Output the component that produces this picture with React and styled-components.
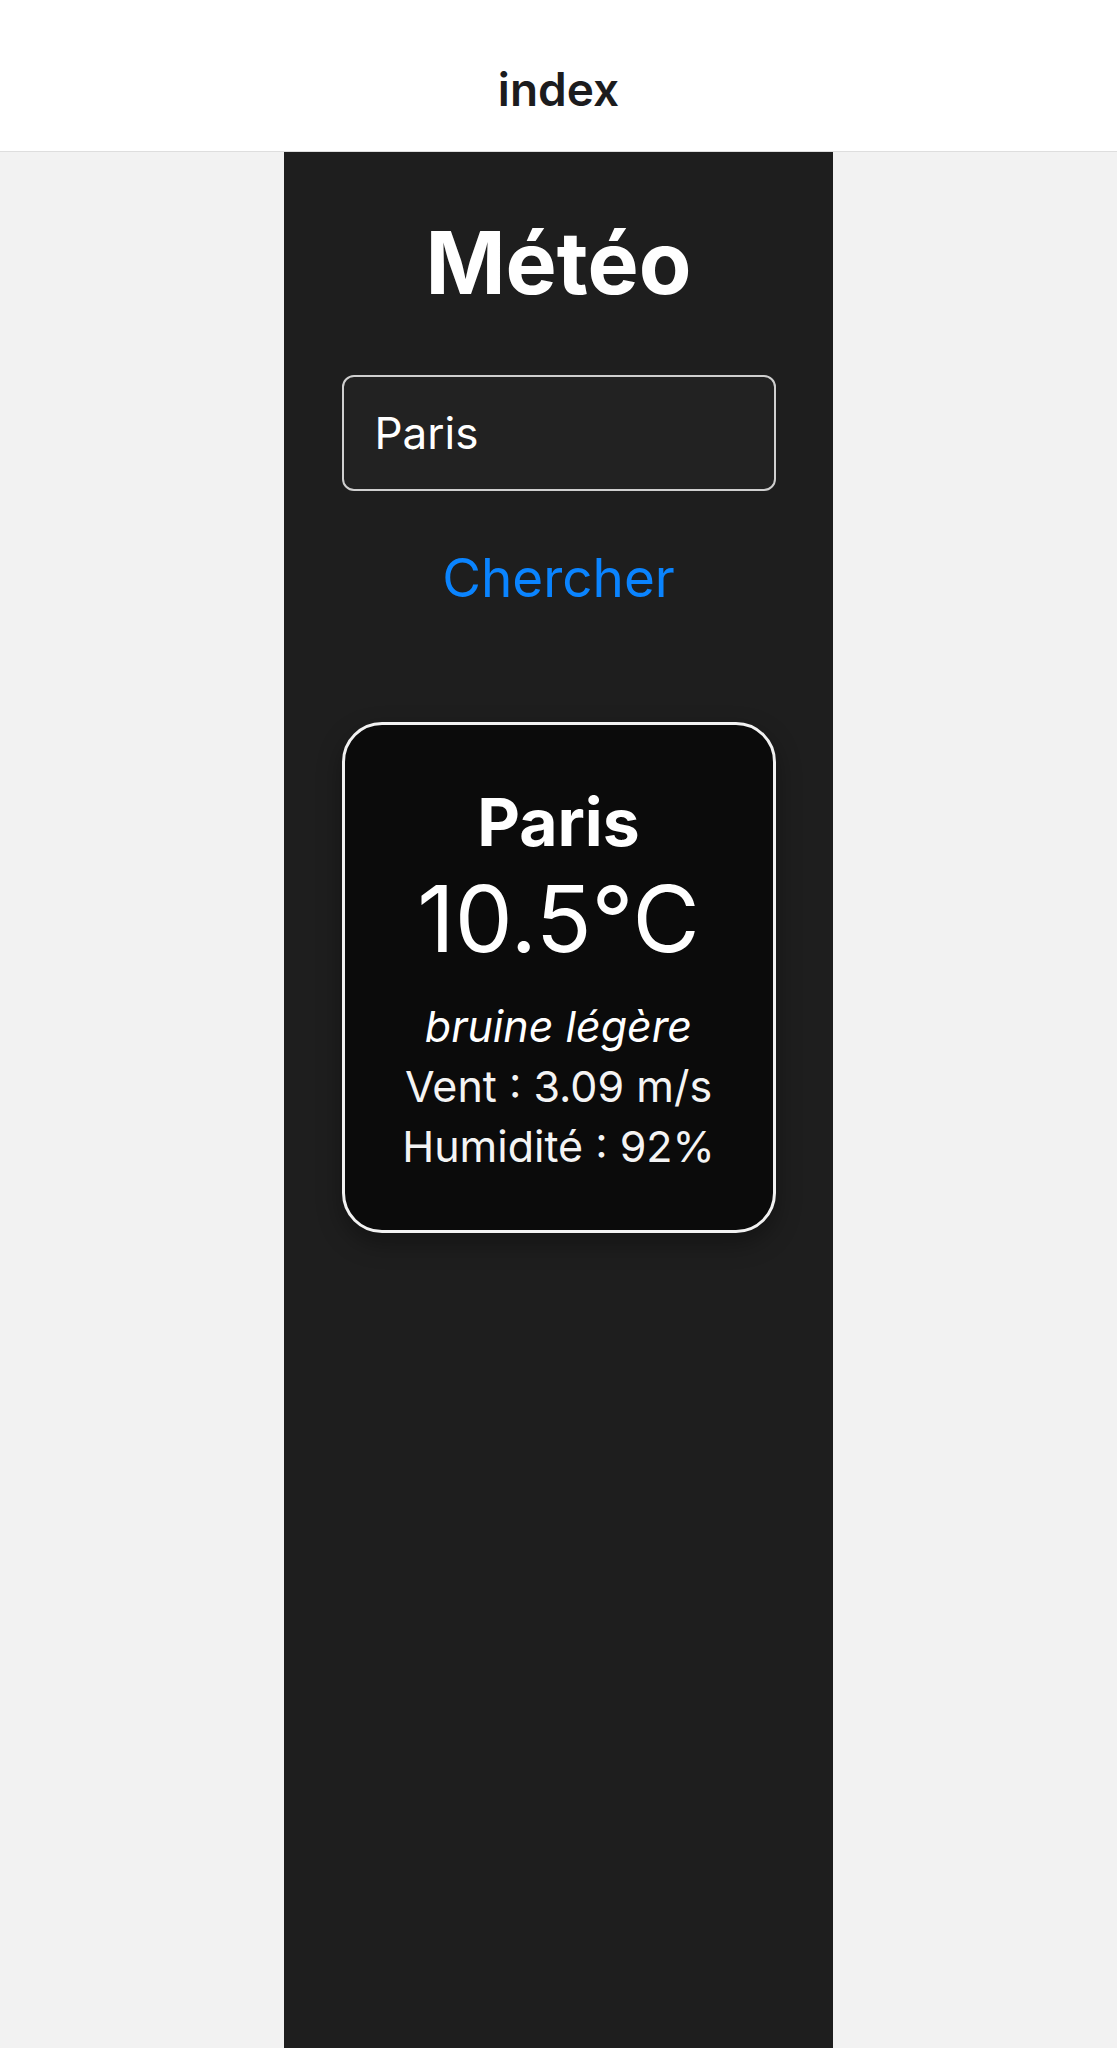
import React, { useState } from "react";
import styled, { createGlobalStyle } from "styled-components";

const GlobalStyle = createGlobalStyle`
    html, body {
        margin: 0;
        padding: 0;
        background: #f2f2f2;
        font-family: Inter, "Noto Sans", "Liberation Sans", sans-serif;
    }
    * {
        box-sizing: border-box;
    }
`;

const App = () => {
    const [city, setCity] = useState("Paris");

    const weather = {
        name: "Paris",
        temp: 10.5,
        description: "bruine légère",
        wind: 3.09,
        humidity: 92,
    };

    return (
        <>
            <GlobalStyle />
            <Header>
                <HeaderTitle>index</HeaderTitle>
            </Header>
            <Page>
                <Column>
                    <Title>Météo</Title>
                    <CityInput
                        value={city}
                        onChange={(e) => setCity(e.target.value)}
                    />
                    <SearchBtn type="button">Chercher</SearchBtn>
                    <Card>
                        <CityName>{weather.name}</CityName>
                        <Temp>{weather.temp}°C</Temp>
                        <Description>{weather.description}</Description>
                        <Detail>Vent : {weather.wind} m/s</Detail>
                        <Detail>Humidité : {weather.humidity}%</Detail>
                    </Card>
                </Column>
            </Page>
        </>
    );
};

const Header = styled.header`
    height: 152px;
    background: #ffffff;
    border-bottom: 1px solid #dedede;
    display: flex;
    align-items: center;
    justify-content: center;
    padding-top: 26px;
`;
const HeaderTitle = styled.h1`
    margin: 0;
    font-size: 46px;
    font-weight: 600;
    line-height: 60px;
    color: #1c1c1e;
`;
const Page = styled.main`
    display: flex;
    justify-content: center;
    background: #f2f2f2;
`;
const Column = styled.div`
    width: 549px;
    min-height: 1896px;
    background: #1e1e1e;
    display: flex;
    flex-direction: column;
    align-items: center;
    padding-top: 59px;
`;
const Title = styled.h2`
    margin: 0;
    font-size: 86px;
    font-weight: 700;
    line-height: 104px;
    color: #ffffff;
`;
const CityInput = styled.input`
    margin-top: 60px;
    width: 434px;
    height: 116px;
    padding: 0 31px;
    border: 2.5px solid #cfcfcf;
    border-radius: 12px;
    background: #222222;
    color: #ffffff;
    font-family: inherit;
    font-size: 44px;
    outline: none;
`;
const SearchBtn = styled.button`
    all: unset;
    margin-top: 54px;
    font-size: 53px;
    line-height: 66px;
    color: #0a84ff;
    cursor: pointer;
`;
const Card = styled.section`
    margin-top: 111px;
    width: 434px;
    padding: 57px 0 54px;
    border: 3px solid #f2f2f2;
    border-radius: 40px;
    background: #0b0b0b;
    box-shadow: 0 10px 24px rgba(0, 0, 0, 0.35);
    display: flex;
    flex-direction: column;
    align-items: center;
    color: #ffffff;
`;
const CityName = styled.div`
    font-size: 66px;
    font-weight: 700;
    line-height: 80px;
`;
const Temp = styled.div`
    font-size: 92px;
    font-weight: 400;
    line-height: 113px;
`;
const Description = styled.div`
    margin-top: 21px;
    font-size: 43px;
    font-style: italic;
    line-height: 60px;
`;
const Detail = styled.div`
    font-size: 43px;
    line-height: 60px;
    color: #f4f4f4;
`;

export default App;
